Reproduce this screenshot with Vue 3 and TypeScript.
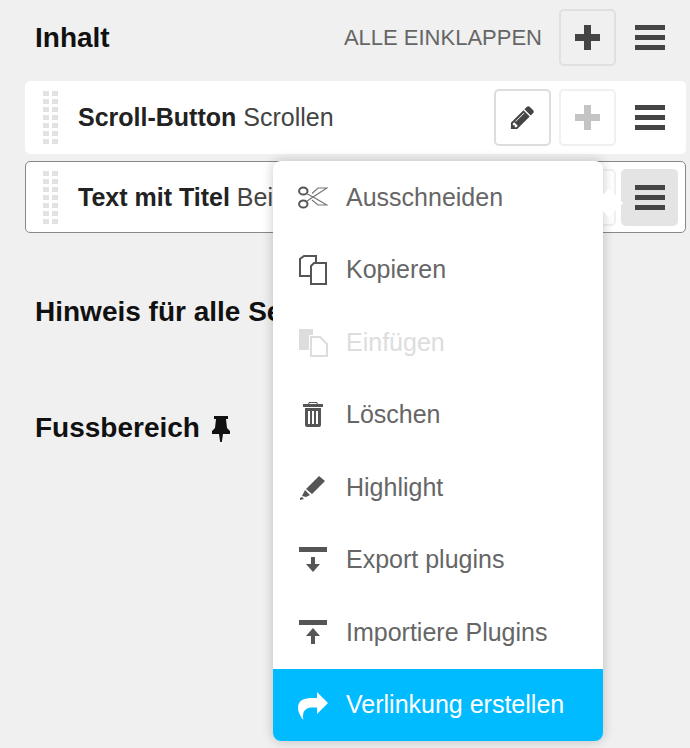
<script setup lang="ts">
interface Shape { d: string; kind: 'fill' | 'stroke' | 'thin' }
interface MenuItem { label: string; shapes: Shape[]; state?: 'disabled' | 'active' }

const grip: number[] = Array.from({ length: 14 }, (_, i) => i)

const bars = 'M0 0h30v5H0zM0 10h30v5H0zM0 20h30v5H0z'
const plus = 'M9 0h7v9h9v7h-9v9H9v-9H0V9h9z'
const pencil = 'M491 1536l91-91-235-235-91 91v107h128v128h107zm523-928q0-22-22-22-10 0-17 7l-542 542q-7 7-7 17 0 22 22 22 10 0 17-7l542-542q7-7 7-17zm-54-192l416 416-832 832h-416v-416zm683 96q0 53-37 90l-166 166-416-416 166-165q36-38 90-38 53 0 91 38l235 234q37 39 37 91z'

const items: MenuItem[] = [
  { label: 'Ausschneiden', shapes: [
    { kind: 'stroke', d: 'M9.5 9a4.200 3.600 0 1 1-8.400 0 4.200 3.600 0 1 1 8.400 0zM9.500 22a4.200 3.600 0 1 1-8.400 0 4.200 3.600 0 1 1 8.400 0z' },
    { kind: 'thin', d: 'M8.500 11.500 15 15l14-9-9 0-6 5.500M8.500 19.500 15 15l14 8-9 0-6-5' }
  ] },
  { label: 'Kopieren', shapes: [
    { kind: 'stroke', d: 'M12 21H2V4l4-3h12v7' },
    { kind: 'stroke', d: 'M13 11l3-3h12v21H13z' }
  ] },
  { label: 'Einfügen', state: 'disabled', shapes: [
    { kind: 'fill', d: 'M1 2h14v6h-4v15H1z' },
    { kind: 'stroke', d: 'M13 10h9l7 7v12H13z' }
  ] },
  { label: 'Löschen', shapes: [
    { kind: 'fill', d: 'M10 4l1-2h8l1 2h5v3H5V4zm1 0h8l-.7-1h-6.600zM7 8h16v17q0 2-2 2H9q-2 0-2-2zm3 3v13h2V11zm4 0v13h2V11zm4 0v13h2V11z' }
  ] },
  { label: 'Highlight', shapes: [
    { kind: 'fill', d: 'M21 4l6 5-13 13-6-5zM7 18l5 5-4 2-4-1zM2 26l2-1 2 2-4 1z' }
  ] },
  { label: 'Export plugins', shapes: [
    { kind: 'fill', d: 'M1 2h28v5H1zM13 12h4v7h5l-7 8-7-8h5z' }
  ] },
  { label: 'Importiere Plugins', shapes: [
    { kind: 'fill', d: 'M1 3h28v5H1zM15 11l7 8h-5v8h-4v-8H8z' }
  ] },
  { label: 'Verlinkung erstellen', state: 'active', shapes: [
    { kind: 'fill', d: 'M19 2l11 11-11 11v-6.500h-4C8 17.500 5 20 5 27c0 1 .5 2 .2 2.500C4 29 0 22.500 0 18 0 10 6 8 15 8h4z' }
  ] }
]
</script>

<template>
  <div class="page">
    <header class="head">
      <h2 class="title">Inhalt</h2>
      <span class="collapse">ALLE EINKLAPPEN</span>
      <button class="btn plain">
        <svg class="ico" width="25" height="25" viewBox="0 0 25 25"><path :d="plus" /></svg>
      </button>
      <button class="btn menu-btn">
        <svg class="ico" width="30" height="25" viewBox="0 0 30 25"><path :d="bars" /></svg>
      </button>
    </header>

    <div class="row">
      <div class="grip"><i v-for="g in grip" :key="g"></i></div>
      <div class="label"><b>Scroll-Button</b> Scrollen</div>
      <button class="btn white">
        <svg class="ico" width="27" height="27" viewBox="0 0 1792 1792"><path :d="pencil" /></svg>
      </button>
      <button class="btn faint">
        <svg class="ico" width="25" height="25" viewBox="0 0 25 25"><path :d="plus" /></svg>
      </button>
      <button class="btn menu-btn">
        <svg class="ico" width="30" height="25" viewBox="0 0 30 25"><path :d="bars" /></svg>
      </button>
    </div>

    <div class="row focus">
      <div class="grip"><i v-for="g in grip" :key="g"></i></div>
      <div class="label"><b>Text mit Titel</b> Beispieltext</div>
      <button class="btn white">
        <svg class="ico" width="27" height="27" viewBox="0 0 1792 1792"><path :d="pencil" /></svg>
      </button>
      <button class="btn faint">
        <svg class="ico" width="25" height="25" viewBox="0 0 25 25"><path :d="plus" /></svg>
      </button>
      <button class="btn menu-btn on">
        <svg class="ico" width="30" height="25" viewBox="0 0 30 25"><path :d="bars" /></svg>
      </button>
    </div>

    <h2 class="section first">Hinweis für alle Seiten</h2>
    <h2 class="section">
      Fussbereich
      <svg class="pin" width="20" height="27" viewBox="0 0 20 27">
        <path d="M3 1h14v3h-2l1 9 3 3v3h-7l-1.200 8h-1.600L8 19H1v-3l3-3 1-9H3z" />
      </svg>
    </h2>

    <nav class="menu">
      <span class="tip"></span>
      <a v-for="item in items" :key="item.label" class="item" :class="item.state">
        <svg class="mi" width="30" height="30" viewBox="0 0 30 30">
          <path v-for="s in item.shapes" :key="s.d" :d="s.d" :class="s.kind" />
        </svg>
        <span>{{ item.label }}</span>
      </a>
    </nav>
  </div>
</template>

<style scoped>
.page {
  position: relative;
  box-sizing: border-box;
  width: 690px;
  height: 748px;
  padding: 0 4px 0 25px;
  overflow: hidden;
  background: #f0f0f0;
  font-family: "Liberation Sans", Arial, sans-serif;
  color: #000;
}
.head {
  display: flex;
  align-items: center;
  height: 57px;
  padding: 9px 8px 15px 10px;
}
.title {
  margin: 0 auto 0 0;
  font-size: 28px;
  font-weight: 700;
  color: #111;
}
.collapse {
  margin-right: 17px;
  font-size: 22px;
  color: #666;
}
.btn {
  display: flex;
  flex: none;
  align-items: center;
  justify-content: center;
  box-sizing: border-box;
  width: 57px;
  height: 57px;
  padding: 0;
  border: 2px solid transparent;
  border-radius: 5px;
  background: transparent;
}
.ico { fill: #444; }
.plain { border-color: #e0e0e0; margin-right: 5px; }
.white { border-color: #ddd; background: #fff; margin-right: 8px; }
.faint { border-color: #f0f0f0; background: #fff; margin-right: 5px; }
.faint .ico { fill: #c4c4c4; }
.on { background: #e4e4e4; }
.row {
  display: flex;
  align-items: center;
  box-sizing: border-box;
  height: 73px;
  margin-bottom: 7px;
  padding: 0 8px 0 18px;
  border-radius: 5px;
  background: #fff;
}
.focus {
  height: 72px;
  padding: 0 7px 0 17px;
  border: 1px solid #888;
}
.grip {
  display: grid;
  flex: none;
  grid-template-columns: 6px 6px;
  grid-auto-rows: 5px;
  gap: 3px;
  width: 15px;
  margin-right: 20px;
}
.grip i { background: #e2e2e2; }
.label {
  flex: 1;
  min-width: 0;
  font-size: 25px;
  color: #444;
  white-space: nowrap;
}
.label b { color: #222; }
.section {
  display: flex;
  align-items: center;
  gap: 11px;
  height: 32px;
  margin: 0 0 84px;
  padding-left: 10px;
  font-size: 28px;
  font-weight: 700;
  color: #111;
}
.section.first { margin-top: 63px; }
.pin { fill: #111; }
.menu {
  position: absolute;
  top: 161px;
  left: 273px;
  display: flex;
  flex-direction: column;
  width: 330px;
  border-radius: 8px;
  background: #fff;
  box-shadow: 0 0 12px rgba(0, 0, 0, 0.22);
}
.tip {
  position: absolute;
  top: 32px;
  left: 326px;
  width: 20px;
  height: 20px;
  background: #fff;
  transform: rotate(45deg);
}
.item {
  position: relative;
  display: flex;
  align-items: center;
  gap: 18px;
  box-sizing: border-box;
  height: 72.5px;
  padding-left: 25px;
  font-size: 25px;
  color: #666;
}
.mi { flex: none; }
.fill { fill: #555; }
.stroke { fill: none; stroke: #555; stroke-width: 2; }
.thin { fill: none; stroke: #777; stroke-width: 1.2; }
.disabled { color: #ddd; }
.disabled .fill { fill: #ddd; }
.disabled .stroke { stroke: #ddd; }
.active {
  border-radius: 0 0 8px 8px;
  background: #00bbff;
  color: #fff;
}
.active .fill { fill: #fff; }
</style>

<style>
html, body { background: #f0f0f0; }
</style>
